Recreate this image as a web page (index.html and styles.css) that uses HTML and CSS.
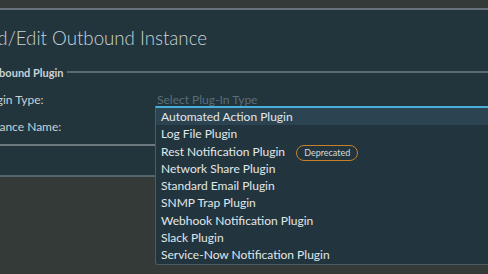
FILE: index.html
```html
<!DOCTYPE html>
<html lang="en">
<head>
    <meta charset="UTF-8">
    <meta name="viewport" content="width=device-width, initial-scale=1.0">
    <title>Add/Edit Outbound Instance</title>
    <link rel="stylesheet" href="styles.css">
</head>
<body>
    <div class="topbar"></div>
    <div class="modal">
        <h3 class="modal-title">Add/Edit Outbound Instance</h3>

        <!-- Plugin section -->
        <div class="plugin-set">
            <div class="legend-row">
                <span class="legend">Outbound Plugin</span>
                <span class="legend-line"></span>
            </div>

            <div class="form-row">
                <label>Plugin Type:</label>
                <div class="select-wrap">
                    <div class="select-placeholder">Select Plug-In Type</div>
                    <ul class="dropdown">
                        <li class="active">Automated Action Plugin</li>
                        <li>Log File Plugin</li>
                        <li>Rest Notification Plugin <span class="badge">Deprecated</span></li>
                        <li>Network Share Plugin</li>
                        <li>Standard Email Plugin</li>
                        <li>SNMP Trap Plugin</li>
                        <li>Webhook Notification Plugin</li>
                        <li>Slack Plugin</li>
                        <li>Service-Now Notification Plugin</li>
                    </ul>
                </div>
            </div>

            <div class="form-row">
                <label>Instance Name:</label>
                <div class="input-wrap"></div>
            </div>
        </div>
    </div>
</body>
</html>
```

FILE: styles.css
```css
html, body {
    height: 100%;
    overflow: hidden;
}

body {
    font-family: Lato, "Open Sans", sans-serif;
    background-color: #333a38;
    margin: 0;
    padding: 0;
    color: #c9d2d6;
}

.topbar {
    height: 8px;
}

.modal {
    background-color: #22353d;
    border-top: 2px solid #67727a;
    border-bottom: 2px solid #56646b;
    height: 169px;
    margin-left: -32px;
    width: calc(100% + 32px);
    box-sizing: border-box;
}

.modal-title {
    margin: 0;
    padding: 16px 0 0 7px;
    font-size: 18.7px;
    font-weight: 300;
    line-height: 24px;
    color: #c9d3d8;
}

.plugin-set {
    margin-top: 16px;
    padding: 0 0 7px 12px;
    border-bottom: 2px solid #6c7a80;
}

.legend-row {
    display: flex;
    align-items: center;
    height: 12px;
}

.legend {
    font-size: 11px;
    font-weight: 700;
    color: #c9d2d6;
    padding-right: 3px;
}

.legend-line {
    flex: 1;
    border-top: 2px solid #5b6b73;
}

.form-row {
    display: flex;
    height: 20px;
    line-height: 20px;
    font-size: 12px;
    margin-top: 7px;
}

.legend-row + .form-row {
    margin-top: 12px;
}

.form-row label {
    width: 175px;
}

.select-wrap {
    position: relative;
    flex: 1;
}

.select-placeholder {
    padding-left: 2px;
    color: #5b6e78;
}

.dropdown {
    position: absolute;
    top: 16px;
    left: 0;
    width: 400px;
    margin: 0;
    padding: 0;
    list-style: none;
    background-color: #22353f;
    border: 1px solid #4c5c66;
    border-top: 2px solid #49afd9;
    border-radius: 0 0 3px 3px;
    z-index: 2;
}

.dropdown li {
    height: 17.3px;
    line-height: 17px;
    padding-left: 5px;
    font-size: 12px;
    color: #e1e7ea;
}

.dropdown li.active {
    background-color: #2c4352;
}

.badge {
    display: inline-block;
    margin-left: 8px;
    padding: 0 7px;
    height: 14px;
    line-height: 14px;
    font-size: 9px;
    border: 1px solid #c57f27;
    border-radius: 8px;
    color: #d2dadd;
    vertical-align: 0;
}
```
